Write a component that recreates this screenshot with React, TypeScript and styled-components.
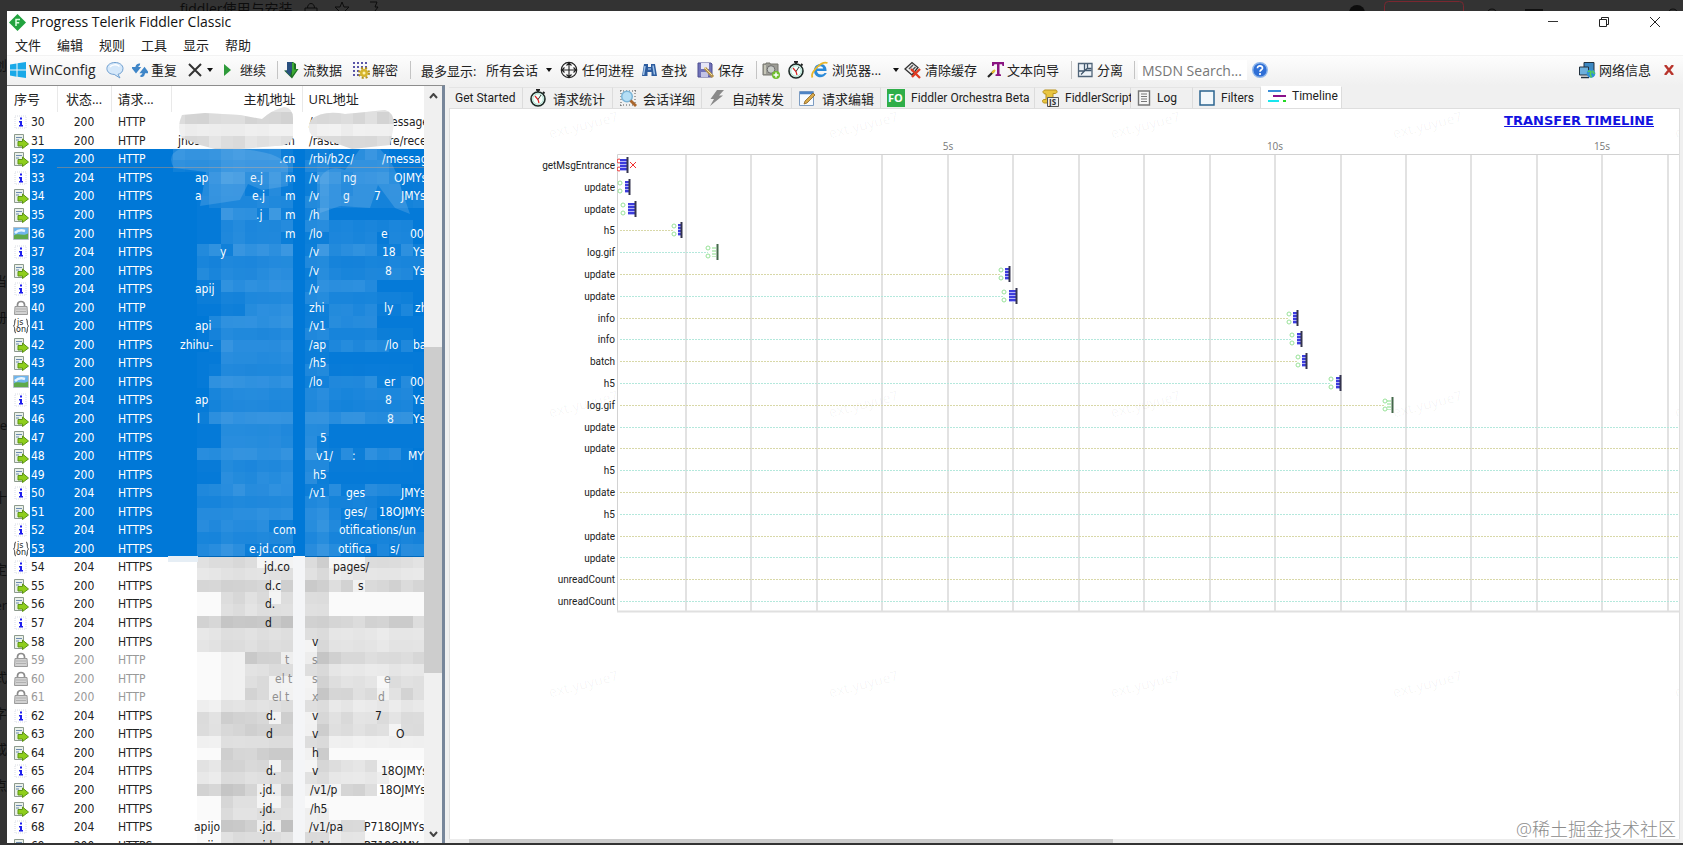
import React from 'react';
import styled, { createGlobalStyle } from 'styled-components';

const UI = `"Open Sans", "Noto Sans CJK SC", sans-serif`;
const SMALL = `Roboto, "Open Sans", sans-serif`;
const GRID = `"DejaVu Sans Condensed", "Open Sans", "Noto Sans CJK SC", sans-serif`;

const Global = createGlobalStyle`
  * { box-sizing: border-box; }
  body { margin: 0; background: #333; font-family: ${UI}; font-size: 13px; color: #222; overflow: hidden; }
  button, input, select { font: inherit; color: inherit; border: 0; padding: 0; background: none; }
  svg { display: block; flex: none; }
`;

/* ---------- desktop behind the window ---------- */
const Desktop = styled.div`
  height: 100vh;
  display: grid;
  grid-template-columns: 7px minmax(0, 1fr);
  grid-template-rows: 11px minmax(0, 1fr) 2px;
  background: #333;
  overflow: hidden;
`;
const BehindTop = styled.div`
  grid-column: 1 / 3;
  display: flex;
  gap: 10px;
  padding-left: 180px;
  overflow: hidden;
  color: #0c0c0c;
  font-size: 14px;
  line-height: 18px;
`;
const BehindRight = styled.div`
  margin-left: auto;
`;
const BehindLeft = styled.div`
  display: flex;
  flex-direction: column;
  align-items: flex-end;
  gap: 16px;
  padding-top: 44px;
  overflow: hidden;
  color: #111;
  font-size: 13px;
  line-height: 20px;
  white-space: nowrap;
`;
const Window = styled.main`
  display: flex;
  flex-direction: column;
  min-width: 0;
  min-height: 0;
  background: #fff;
  overflow: hidden;
  position: relative;
`;

/* ---------- title, menu ---------- */
const TitleBar = styled.header`
  display: flex;
  align-items: center;
  height: 23px;
  flex: none;
  padding: 0 22px 1px 2px;
  gap: 5px;
`;
const Title = styled.h1`
  flex: 1;
  margin: 0;
  font-size: 14px;
  line-height: 20px;
  font-weight: 400;
  color: #111;
`;
const WinButtons = styled.div`
  display: flex;
  gap: 39px;
`;
const IconButton = styled.button`
  display: flex;
`;
const MenuBar = styled.nav`
  display: flex;
  height: 21px;
  flex: none;
  padding-left: 8px;
  gap: 15px;
  align-items: center;
`;
const Menu = styled.button`
  width: 27px;
  line-height: 20px;
  white-space: nowrap;
  text-align: left;
`;

/* ---------- toolbar ---------- */
const Toolbar = styled.div`
  display: flex;
  align-items: center;
  height: 30px;
  flex: none;
  padding: 0 0 1px 2px;
  background: linear-gradient(#fdfdfd, #f0f0f0);
  border-top: 1px solid #f3f3f3;
`;
const Tool = styled.button<{ $w: number; $slot?: number; $end?: boolean }>`
  display: flex;
  align-items: center;
  flex: none;
  width: ${p => p.$w}px;
  height: 26px;
  line-height: 26px;
  white-space: nowrap;
  text-align: left;
  margin-left: ${p => (p.$end ? 'auto' : '0')};
  > svg:first-child { margin-right: ${p => (p.$slot ?? 18) - 18}px; }
  > svg + svg { margin-left: 1px; }
  > span + svg { margin-left: auto; margin-right: 5px; }
`;
const ToolLatin = styled.span`
  font-size: 14px;
`;
const Sep = styled.span<{ $w: number }>`
  flex: none;
  width: ${p => p.$w}px;
  height: 18px;
  border-left: 1px solid #c4c4c4;
`;
const ShowLabel = styled.label`
  width: 65px;
  flex: none;
  white-space: nowrap;
`;
const ShowSelect = styled.span`
  display: flex;
  align-items: center;
  width: 74px;
  gap: 7px;
  flex: none;
  select { appearance: none; width: 53px; height: 24px; white-space: nowrap; }
`;
const Search = styled.input`
  width: 109px;
  height: 20px;
  margin-right: 5px;
  padding-left: 4px;
  background: #fff;
  &, &::placeholder { font-size: 14px; }
  &::placeholder { color: #777; opacity: 1; }
`;

/* ---------- panes ---------- */
const Panes = styled.div`
  flex: 1;
  min-height: 0;
  display: flex;
  background: #f0f0f0;
`;
const Sessions = styled.section`
  display: flex;
  flex: none;
  width: 438px;
  padding-left: 1px;
  border-top: 1px solid #8d8d8d;
  border-right: 3px solid #77869a;
  background: #fff;
`;
const ListView = styled.div`
  position: relative;
  width: 416px;
  overflow: hidden;
  background: #fff;
`;
const Table = styled.table`
  table-layout: fixed;
  width: 416px;
  height: 768px;
  border-collapse: collapse;
  font-family: ${GRID};
  font-size: 12px;
  line-height: 16px;
  white-space: nowrap;
  th, td { padding: 0; overflow: hidden; }
  td { padding-top: 2px; }
`;
const Th = styled.th<{ $align: string }>`
  height: 26px;
  font-family: ${UI};
  font-size: 13px;
  font-weight: 400;
  text-align: ${p => p.$align};
  border-right: 1px solid #e9e9e9;
  && { padding: 0 6px; }
`;
const Row = styled.tr<{ $sel: boolean; $dim: boolean; $focus: boolean }>`
  color: ${p => (p.$sel ? '#fff' : p.$dim ? '#999' : '#222')};
  td { background: ${p => (p.$sel ? '#0078d7' : '#fff')}; }
  td:first-child { background: ${p => (p.$sel ? 'linear-gradient(90deg, #fff 22px, #0078d7 22px)' : '#fff')}; }
  td:nth-child(2) { text-align: center; }
  td:nth-child(3) { padding-left: 7px; }
  ${p => p.$focus && 'td:not(:first-child) { box-shadow: inset 0 -1px #5d86a8; }'}
`;
const NumCell = styled.div`
  display: flex;
  align-items: center;
  gap: 2px;
  padding-left: 5px;
  height: 16px;
`;
const Slots = styled.div`
  display: flex;
  height: 16px;
`;
const Slot = styled.span<{ $w: number }>`
  flex: none;
  width: ${p => p.$w}px;
`;
const Mosaic = styled.svg`
  position: absolute;
  left: 155px;
  top: 18px;
  pointer-events: none;
`;
const Scroll = styled.div`
  flex: 1;
  display: flex;
  flex-direction: column;
  align-items: center;
  justify-content: space-between;
  padding: 7px 0 6px;
  background: #f0f0f0;
  position: relative;
`;
const Thumb = styled.span`
  position: absolute;
  left: 0;
  right: 0;
  top: 34.5%;
  height: 43%;
  background: #cdcdcd;
`;

const Inspector = styled.section`
  flex: 1;
  min-width: 0;
  display: flex;
  flex-direction: column;
  padding: 1px 3px 0 4px;
`;
const Tabs = styled.div`
  display: flex;
  height: 22px;
  flex: none;
  align-items: flex-end;
`;
const Tab = styled.button<{ $w: number; $on?: boolean }>`
  display: flex;
  align-items: center;
  gap: 6px;
  flex: none;
  width: ${p => p.$w}px;
  height: ${p => (p.$on ? 22 : 21)}px;
  padding: ${p => (p.$on ? '0 0 3px 7px' : '0 0 0 6px')};
  background: ${p => (p.$on ? '#fff' : '#f0f0f0')};
  border-right: 1px solid #dcdcdc;
  border-top: 1px solid ${p => (p.$on ? '#fff' : '#e4e4e4')};
  white-space: nowrap;
`;
const TabLatin = styled.span`
  font-family: ${SMALL};
  font-size: 12px;
`;
const Panel = styled.div`
  flex: 1;
  min-height: 0;
  position: relative;
  background: #fff;
  border: 1px solid #dedede;
  border-bottom: 0;
  display: flex;
  flex-direction: column;
  overflow: hidden;
`;
const LinkRow = styled.div`
  height: 30px;
  flex: none;
  text-align: right;
  padding: 2px 25px 0 0;
  a { color: #1212e0; font: bold 13px/20px "DejaVu Sans", sans-serif; }
`;
const Chart = styled.div`
  display: flex;
  flex: none;
`;
const Labels = styled.ol`
  width: 167px;
  height: 458px;
  margin: 14px 0 0;
  padding: 0;
  list-style: none;
  display: flex;
  flex-direction: column;
  font-family: ${SMALL};
  font-size: 10px;
  text-align: right;
  flex: none;
`;
const Label = styled.li`
  flex: 1;
  display: flex;
  align-items: center;
  justify-content: flex-end;
  padding: 3px 2px 0 0;
`;
const Plot = styled.svg`
  flex: 1;
  min-width: 0;
  height: 474px;
  overflow: hidden;
  text { font: 10px ${UI}; fill: #777; }
`;
const HScroll = styled.div`
  height: 4px;
  flex: none;
  padding: 0 567px 0 20px;
  background: #ececec;
  &::before { content: ''; display: block; height: 4px; background: #cbcbcb; }
`;
const Mark = styled.span<{ $x: number; $y: number }>`
  position: absolute;
  left: ${p => p.$x}px;
  top: ${p => p.$y}px;
  transform: rotate(-14deg);
  color: rgba(0, 0, 0, 0.045);
  font-size: 14px;
  line-height: 20px;
  pointer-events: none;
`;
const Credit = styled.span`
  position: absolute;
  right: 7px;
  bottom: 2px;
  font-size: 18px;
  line-height: 24px;
  font-weight: 300;
  color: #8c8c8c;
`;

/* ---------- icons ---------- */
const I = ({ children, w = 18 }: { children: React.ReactNode; w?: number }) => (
  <svg width={w} height="18" viewBox={`0 0 ${w} 18`} fill="none" aria-hidden="true">{children}</svg>
);
const Caret = () => <svg width="6" height="4" viewBox="0 0 6 4"><path d="M0 0h6L3 4z" fill="#111" /></svg>;
const Logo = () => <svg width="17" height="17" viewBox="0 0 17 17"><path d="M8.500 0 17 8.500 8.500 17 0 8.500z" fill="#22a33f" /><path d="M7 12V5.500h4M7 8.700h3.200" stroke="#d9ffe0" strokeWidth="1.500" fill="none" /></svg>;
const WinIcon = () => <I><path d="M1 3.500 7.500 2.400V8.500H1zM8.500 2.200 17 1v7.500H8.500zM1 9.500h6.500v6.200L1 14.600zM8.500 9.500H17V17l-8.500-1.200z" fill="#19a9e8" /></I>;
const Bubble = () => <I><path d="M9 1.500c4.500 0 8 2.500 8 6s-2.600 5.400-5 5.800L14 17l-5.800-3.600C4 13.400.9 11 .9 7.500s3.600-6 8.100-6z" fill="#d5e8fa" stroke="#6f9fd0" /><path d="M4 6c2-2.500 7-3 9.500-.5" stroke="#fff" strokeWidth="1.500" /></I>;
const Replay = () => <I w={16}><path d="M8 3.500C5 3 4 5 4 9M.8 7 4 11l3.300-4z" stroke="#3f86c8" strokeWidth="1.800" fill="#3f86c8" /><path d="M8.500 15c3 .5 4-1.500 4-5.500M9.300 11.300l3.200-4 3 4z" stroke="#3f86c8" strokeWidth="1.800" fill="#3f86c8" /></I>;
const Cross = () => <I w={14}><path d="M1 3l12 12M13 3 1 15" stroke="#333" strokeWidth="2" /></I>;
const Play = () => <I w={12}><path d="M0 3l7 6-7 6z" fill="#2e9a3a" /></I>;
const Stream = () => <I><path d="M4 1h6l3 2v5h2.500L9 17.500 1 9.500h3z" fill="#1d6f24" /><path d="M4 1h5v8L7 15 2 9.500h2z" fill="#29507f" /><path d="M9 2h2v6.500h3L9 15z" fill="#3daa32" /></I>;
const Decode = () => <I><path d="M1 2h14M1 6h14M1 10h6M1 14h6" stroke="#5a55a8" strokeWidth="2" strokeDasharray="2 2" /><circle cx="12" cy="12" r="4" fill="#d6b52c" /><circle cx="12" cy="12" r="5" stroke="#b3921c" strokeWidth="2" strokeDasharray="2 2" /><circle cx="12" cy="12" r="1.500" fill="#fff3b0" /></I>;
const Target = () => <I><circle cx="9" cy="9" r="7.700" stroke="#222" strokeWidth="1.200" /><path d="M9 1v16M1 9h16M6.500 4.500 9 2l2.500 2.500M6.500 13.500 9 16l2.500-2.500M4.500 6.500 2 9l2.500 2.500M13.500 6.500 16 9l-2.500 2.500" stroke="#222" strokeWidth="1.100" /></I>;
const Binoc = () => <I><path d="M3 3h4v3h3V3h4l2 12h-5.500v-4H6.500v4H1z" fill="#2d5c9e" /><path d="M4 5 2.500 14M12 4.500l1.500 9" stroke="#9fc3ea" strokeWidth="1.500" /><path d="M7 8h3" stroke="#c8def5" /></I>;
const Save = () => <I><path d="M1 2h13l1 1v13H1z" fill="#7072b8" stroke="#4d4f92" /><path d="M4 2h8v6H4z" fill="#e6e6f6" /><path d="M4 11h7v5H4z" fill="#c2c3e4" /><path d="m8 7 8 9" stroke="#b4924a" strokeWidth="3" /><path d="m7 6 8 8" stroke="#f3e0a0" /></I>;
const Camera = () => <I><path d="M1 3h3V2h4v1h8v11H1z" fill="#9c9c95" stroke="#76766f" /><circle cx="9" cy="8.500" r="3.800" fill="#c9cdc9" stroke="#6c6c6c" /><path d="M3 4v9" stroke="#c6c6b8" strokeWidth="2" /><circle cx="14" cy="14" r="4" fill="#6fbe2c" /><path d="M11.500 14h5M14 11.500v5" stroke="#fff" strokeWidth="1.500" /></I>;
const Clock = () => <I><path d="M7 .8h4M9 1v2M14 3l1.500 1.500" stroke="#222" strokeWidth="1.800" /><circle cx="9" cy="10" r="7" fill="#f5fffb" stroke="#1c2a26" strokeWidth="1.600" /><circle cx="9" cy="10" r="5.300" stroke="#a6dccb" /><path d="m6 7 3 3.500L10 14" stroke="#d22" strokeWidth="1.200" /><path d="m9 10.500 3-4.500" stroke="#333" /></I>;
const Browser = () => <I><path d="M15.500 10H6c.3 4 5.500 4.500 7.500 2h2.300C12.500 18.500 3 17.500 3 9.500 3 2 13 1 15 6.500c.4 1.200.6 2.400.5 3.500z" fill="#2b8ad8" /><path d="M6.200 7.500h6C11.500 4.500 7 4.500 6.200 7.500z" fill="#fff" /><path d="M1.500 16.500C-1 12 10-.5 16.500 2" stroke="#e8b62a" strokeWidth="1.800" /></I>;
const Clear = () => <I><path d="M1 8 8 1.500l6 5L8 14z" fill="#ececec" stroke="#333" strokeWidth="1.300" /><path d="m5 8 4-4M7.500 10l4-4" stroke="#555" strokeWidth="1.500" /><path d="m7 8 9 9M16 8l-8 8" stroke="#df3a22" strokeWidth="2.300" /></I>;
const Wizard = () => <I><path d="M5 1h12v4h-1.500L15 3.200h-2.500V13l1.500.5V15H8.500v-1.500L10 13V3.200H7.500L6.500 5H5z" fill="#8a1582" /><path d="m1 16 6-6" stroke="#222" strokeWidth="2.200" /><path d="m5 12 3-3" stroke="#e9c02e" strokeWidth="2.200" /></I>;
const Detach = () => <I><path d="M1.500 2.500h13.500v13H1.500z" stroke="#506478" strokeWidth="1.300" fill="#eef3f8" /><path d="M7.500 3v7H2M8 9.500h6.500M4 13.500l6-6M10.500 3v4.500h4" stroke="#42586e" strokeWidth="1.300" /></I>;
const Help = () => <svg width="16" height="16" viewBox="0 0 16 16"><circle cx="8" cy="8" r="7.300" fill="#2f6fd6" stroke="#8fb6ea" strokeWidth="1.400" /><path d="M5.500 6.200c0-3.200 5.200-3 5 0C10.400 7.800 8 7.800 8 9.800M8 11v2" stroke="#fff" strokeWidth="1.700" fill="none" /></svg>;
const Net = () => <I><path d="M6 1.500h10v9H6z" fill="#3c88c2" stroke="#22313f" /><path d="M1.500 6h9v8h-9z" fill="#6eb0dc" stroke="#22313f" /><path d="M3 16.500h8" stroke="#22313f" strokeWidth="1.500" /><circle cx="13" cy="12.500" r="4.300" fill="#2f8fd8" /><path d="M10 11c2-2.500 4 0 2.500 1.500s1.500 2 .5 4M15 9.500c-1 2 1 2 1.500 3.500" stroke="#58d051" strokeWidth="1.600" /></I>;
const RedX = () => <svg width="10" height="10" viewBox="0 0 10 10"><path d="m1 0 8 10M9 0 1 10" stroke="#b8342c" strokeWidth="2.400" /></svg>;

const Inspect = () => <I><path d="M1 2h16M1 16h16M2 1v16M16 1v16" stroke="#555" strokeDasharray="1 2" /><circle cx="8" cy="7.500" r="5.300" fill="#b5def5" stroke="#7cb5d8" strokeWidth="1.500" /><path d="m11.500 11.500 5.500 5.500" stroke="#a9662c" strokeWidth="2.800" /></I>;
const Bolt = () => <I><path d="M9 1h7l-5 5.500h4L2 17l4-7H2.500z" fill="#8a8a8a" /></I>;
const Compose = () => <I><path d="M1.500 2.500h14v14h-14z" fill="#f6faff" stroke="#7c9cc2" /><path d="M2 4h13" stroke="#4d83c4" strokeWidth="2.500" /><path d="m7 12 8-8 2 2-8 8-3 1z" fill="#d8a94a" stroke="#8a6424" strokeWidth=".8" /></I>;
const FO = () => <I><path d="M0 0h18v18H0z" fill="#2fae49" /><text x="1" y="13" fontFamily="Open Sans" fontSize="11" fontWeight="700" fill="#fff">FO</text></I>;
const Script = () => <I><path d="M2 2.500c1-2 3-1.500 4-1.500h9c2 1 1 3.500-1 3.500h-2V11c0 2-1 3-3 3H3c-2-.5-2-3.500 0-3.500h2V5C3.500 5 2 4.500 2 2.500z" fill="#e9c541" stroke="#b8921e" /><path d="M6.500 8.500h11v9h-11z" fill="#efefef" stroke="#555" /><text x="8" y="16" fontFamily="Open Sans" fontSize="8" fontWeight="700" fill="#333">JS</text></I>;
const LogIcon = () => <I w={14}><path d="M1.500 2h11v14h-11z" fill="#f6f6f6" stroke="#777" strokeWidth="1.400" /><path d="M4 5h6M4 7.500h6M4 10h6M4 12.500h6" stroke="#777" /></I>;
const FilterBox = () => <I w={16}><path d="M1 2h14v14H1z" fill="#f3f8fb" stroke="#2b6490" strokeWidth="1.500" /></I>;
const Lines = () => <I><path d="M0 4h13" stroke="#3b8fd8" strokeWidth="2" /><path d="M5 9h13" stroke="#8a108a" strokeWidth="2" /><path d="M0 14h11" stroke="#19e6ee" strokeWidth="2" /><path d="M15 14h3" stroke="#24d824" strokeWidth="2" /></I>;

const rowIcons: Record<string, React.ReactNode> = {
  d: <svg width="16" height="16" viewBox="0 0 16 16"><path d="M1.500 1.500h9v13h-9z" fill="#eaf0ea" stroke="#8d9a8d" /><path d="M3 4.500h6M3 7h3" stroke="#6d8bb0" /><path d="M5 8.500h4.500V6L15.500 11l-6 4.500V13H5z" fill="#8fce1c" stroke="#5c9416" /></svg>,
  i: <svg width="16" height="16" viewBox="0 0 16 16"><path d="M2 2h11v12H2z" fill="#fff" stroke="#d8dce4" strokeDasharray="1 1" /><path d="M7 3.500h2v2H7zM6 7h3v4h1v1.500H6V11h1V8.500H6z" fill="#1d1dee" /></svg>,
  p: <svg width="16" height="16" viewBox="0 0 16 16"><path d="M.5 1.500h15v12H.5z" fill="#6fb5ec" stroke="#b4bec4" /><path d="M1 9.500c4-3 9 1 14-2V13H1z" fill="#5fa94a" /><path d="M2 7c3-3 7-3 10-2" stroke="#e6f4ff" strokeWidth="2.500" fill="none" /></svg>,
  l: <svg width="16" height="16" viewBox="0 0 16 16"><path d="M4.500 7V4.500C5 .5 11 .5 11.500 4.500V7" stroke="#8b8b8b" strokeWidth="1.700" fill="none" /><path d="M2 6.500h12l.5 8h-13z" fill="#d2d2d2" stroke="#999" /><path d="M3 9h10M3 11.500h10" stroke="#b0b0b0" /></svg>,
  j: <svg width="16" height="16" viewBox="0 0 16 16"><path d="M3 1C1 1 2.500 7 .5 8c2 1 .5 7 2.500 7M13 1c2 0 .5 6 2.500 7-2 1-.5 7-2.500 7" stroke="#333" fill="none" /><text x="4" y="7" fontFamily="DejaVu Sans" fontSize="8" fill="#222">js</text><text x="3" y="14" fontFamily="DejaVu Sans" fontSize="8" fill="#222">on</text></svg>,
};

/* ---------- session data: visible pieces of the masked columns, with their x ---------- */
type Piece = [number, string];
type Session = { n: number; k: string; s: number; h: Piece[]; u: Piece[]; hx: number; ux: number };
const r = (n: number, k: string, hx: number, ux: number, h: Piece[], u: Piece[]): Session =>
  ({ n, k, s: k === 'i' && n !== 30 ? 204 : 200, h, u, hx, ux });
const sessions: Session[] = [
  r(30, 'i', 181, 390, [], [[309, '/'], [391, 'essage']]),
  r(31, 'd', 209, 380, [[178, 'jnos-'], [282, 'cn']], [[309, '/rastbc/'], [382, 'ure/rece']]),
  r(32, 'd', 173, 384, [[279, '.cn']], [[309, '/rbi/b2c/'], [382, '/message']]),
  r(33, 'i', 209, 425, [[195, 'ap'], [250, 'e.j'], [285, 'm']], [[309, '/v'], [343, 'ng'], [394, 'OJMYs']]),
  r(34, 'd', 209, 425, [[195, 'a'], [252, 'e.j'], [285, 'm']], [[309, '/v'], [343, 'g'], [374, '7'], [401, 'JMYs']]),
  r(35, 'd', 221, 329, [[256, '.j'], [285, 'm']], [[309, '/h']]),
  r(36, 'p', 221, 413, [[285, 'm']], [[309, '/lo'], [381, 'e'], [410, '00']]),
  r(37, 'i', 197, 425, [[220, 'y']], [[309, '/v'], [382, '18'], [413, 'Ys']]),
  r(38, 'd', 197, 425, [], [[309, '/v'], [385, '8'], [413, 'Ys']]),
  r(39, 'i', 197, 377, [[195, 'apij']], [[309, '/v']]),
  r(40, 'l', 245, 413, [], [[309, 'zhi'], [384, 'ly'], [415, 'zh']]),
  r(41, 'j', 209, 377, [[195, 'api']], [[309, '/v1']]),
  r(42, 'd', 209, 413, [[180, 'zhihu-']], [[309, '/ap'], [385, '/lo'], [413, 'ba']]),
  r(43, 'd', 221, 329, [], [[309, '/h5']]),
  r(44, 'p', 209, 413, [], [[309, '/lo'], [384, 'er'], [410, '00']]),
  r(45, 'i', 209, 413, [[195, 'ap']], [[385, '8'], [413, 'Ys']]),
  r(46, 'd', 197, 413, [[197, 'l']], [[387, '8'], [413, 'Ys']]),
  r(47, 'd', 221, 329, [], [[320, '5']]),
  r(48, 'd', 197, 413, [], [[316, 'v1/'], [352, ':'], [408, 'MYs']]),
  r(49, 'd', 221, 329, [], [[313, 'h5']]),
  r(50, 'i', 197, 401, [], [[309, '/v1'], [346, 'ges'], [401, 'JMYs']]),
  r(51, 'd', 197, 377, [], [[344, 'ges/'], [379, '18OJMYs']]),
  r(52, 'i', 197, 425, [[273, 'com']], [[339, 'otifications/un']]),
  r(53, 'j', 197, 425, [[249, 'e.jd.com']], [[338, 'otifica'], [390, 's/']]),
  r(54, 'i', 197, 425, [[264, 'jd.co']], [[333, 'pages/']]),
  r(55, 'd', 197, 425, [[265, 'd.c']], [[358, 's']]),
  r(56, 'd', 221, 329, [[265, 'd.']], []),
  r(57, 'i', 197, 425, [[265, 'd']], []),
  r(58, 'd', 197, 425, [], [[312, 'v']]),
  r(59, 'l', 245, 425, [[285, 't']], [[312, 's']]),
  r(60, 'l', 245, 425, [[275, 'el t']], [[312, 's'], [384, 'e']]),
  r(61, 'l', 245, 425, [[272, 'el t']], [[312, 'x'], [378, 'd']]),
  r(62, 'i', 197, 425, [[266, 'd.']], [[312, 'v'], [375, '7']]),
  r(63, 'd', 197, 425, [[266, 'd']], [[312, 'v'], [396, 'O']]),
  r(64, 'd', 221, 329, [], [[312, 'h']]),
  r(65, 'i', 197, 389, [[266, 'd.']], [[312, 'v'], [381, '18OJMYs']]),
  r(66, 'd', 197, 377, [[259, '.jd.']], [[310, '/v1/p'], [379, '18OJMYs']]),
  r(67, 'd', 221, 305, [[259, '.jd.']], [[310, '/h5']]),
  r(68, 'i', 221, 365, [[194, 'apijo'], [259, '.jd.']], [[309, '/v1/pa'], [364, 'P718OJMYs']]),
  r(69, 'd', 221, 365, [[194, 'apijo'], [259, '.jd.']], [[309, '/v1/pa'], [364, 'P718OJMYs']]),
];
const isHttp = (n: number) => n < 33 || n === 40 || (n > 58 && n < 62);

const Pieces = ({ list, from }: { list: Piece[]; from: number }) => (
  <Slots>
    {list.length > 0 && <Slot $w={list[0][0] - from} />}
    {list.map(([x, t], i) => <Slot key={x} $w={(list[i + 1]?.[0] ?? x + 60) - x}>{t}</Slot>)}
  </Slots>
);

/* ---------- pixelated mask over the host and URL columns ---------- */
const CELL = 12;
const noise = (a: number, b: number) => { const v = Math.sin(a * 12.9898 + b * 78.233) * 43758.5453; return v - Math.floor(v); };
const rowTop = (i: number) => 112 + i * 18.55;
const blocks: React.ReactNode[] = [];
for (let row = 3; row < 61; row++) {
  for (let col = -1; col < 20; col++) {
    const x = 185 + col * CELL, y = 112 + row * CELL;
    const dark = y >= 148 && y < 556;
    let a = 0, clear = false;
    sessions.forEach((s, i) => {
      const top = rowTop(i) + 3, cover = Math.max(0, Math.min(y + CELL, top + 12) - Math.max(y, top)) / CELL;
      if (!cover) return;
      const inHost = x >= s.hx - 8 && x < 293, inUrl = x >= 305 && x < s.ux;
      if (inHost || inUrl) a += cover * (0.6 + 0.4 * noise(col, i));
      if (cover > 0.5 && [...s.h, ...s.u].some(([px, t]) => x + CELL > px + 4 && x < px + t.length * 6 - 4)) clear = true;
    });
    const smear = (x >= 221 && x < 293) || (x >= 305 && x < 329);
    if (smear) a += 0.25 + 0.15 * noise(col, 99);
    else if (x >= 197 && x !== 293 && y > 190) a += 0.1;
    if (clear) a *= 0.3;
    if (a < 0.05) continue;
    blocks.push(<rect key={`${row}.${col}`} x={x} y={y} width={CELL} height={CELL} fill={dark ? '#b4d8f6' : '#000'} fillOpacity={a * (dark ? 0.27 : 0.19)} />);
  }
}
const bands = ['#d6d6d6', '#d2d2d2', '#ececec', '#d8d8d8', '#d8d8d8'];
const HeadMask = () => (
  <>
    <defs>
      <clipPath id="blobs">
        <path d="M182 115 205 113 240 115 262 119Q272 110 284 107 293 108 293 118V138Q288 147 275 146L240 149 215 149 200 145 182 138Q176 128 182 115z" />
        <path d="M311 120Q322 110 345 114L366 112 385 110Q394 112 394 125L390 145 352 149 335 143 312 136Q306 128 311 120z" />
      </clipPath>
    </defs>
    <g clipPath="url(#blobs)">
      {bands.map((c, b) => <path key={b} d={`M171 ${100 + b * CELL}h254v${CELL}h-254z`} fill={c} />)}
      {Array.from({ length: 84 }, (_, i) => (
        <rect key={i} x={173 + (i % 21) * CELL} y={100 + Math.floor(i / 21) * CELL} width={CELL} height={CELL} fill="#fff" fillOpacity={noise(i, 7) * 0.35} />
      ))}
    </g>
    <path d="M174 168Q166 155 180 149L240 149Q280 152 288 166V186L262 190 248 184 240 200 200 206 206 172z" fill="#b4d8f6" fillOpacity=".2" />
    <path d="M320 213V178Q328 164 345 170L360 149H380Q396 165 400 185L410 214 395 208 378 185 370 208 340 206z" fill="#b4d8f6" fillOpacity=".2" />
    <path d="M293 556h12v290h-12z" fill="#f4f5f7" />
    <path d="M168 556h30v6h-30z" fill="#e6eef5" />
  </>
);

/* ---------- timeline ---------- */
const labels = ['getMsgEntrance', 'update', 'update', 'h5', 'log.gif', 'update', 'update', 'info', 'info', 'batch', 'h5', 'log.gif',
  'update', 'update', 'h5', 'update', 'h5', 'update', 'update', 'unreadCount', 'unreadCount'];
/* end of the transfer, width of the body stripes, position of the connection rings */
const transfers: [number, number, number][] = [[10, 7, -2], [12, 4, 3], [18, 7, 6], [64, 3, 57], [100, 0, 91], [392, 4, 384], [399, 7, 387],
  [680, 4, 672], [684, 4, 675], [689, 4, 681], [723, 4, 714], [775, 0, 768]];
const PITCH = 458 / 21;

const Timeline = () => (
  <Plot>
    {Array.from({ length: 40 }, (_, i) => {
      const x = 69 + Math.round(i * 65.45);
      return <path key={i} d={`M${x} 15.500V473`} stroke="#e2e2e2" strokeWidth="2" />;
    })}
    <path d="M.5 473V15.500H3000" stroke="#d2d2d2" fill="none" />
    <path d="M0 472.500H3000" stroke="#e0e0e0" strokeWidth="2" />
    {[1, 2, 3, 4].map(i => <text key={i} x={4 + i * 327} y="11" textAnchor="middle">{i * 5}s</text>)}
    {labels.map((_, i) => {
      if (i < 3) return null;
      const y = Math.round(15 + (i + 0.5) * PITCH) + 0.5, end = transfers[i]?.[2] ?? 3000;
      return <path key={i} d={`M3 ${y}H${end}`} stroke={i % 2 ? '#d8d8a8' : '#b4e8dc'} strokeDasharray="2 1" />;
    })}
    {transfers.map(([end, w, ring], i) => {
      const y = Math.round(15 + (i + 0.5) * PITCH), c = i ? '#98e298' : '#f03030';
      return (
        <g key={i} fill="none">
          <circle cx={Math.max(ring, 2)} cy={y - 4} r="2" stroke={c} />
          <circle cx={Math.max(ring, 2)} cy={y + 4} r="2" stroke={c} />
          {w > 0
            ? <><path d={`M${end - w} ${y}H${end}`} stroke="#b4b4f7" strokeWidth="12" /><path d={`M${end - w} ${y - 5}h${w}m-${w} 3h${w}m-${w} 3h${w}m-${w} 3h${w}`} stroke="#3c3cdc" strokeWidth="2" /></>
            : <path d={`M${end - 4} ${y - 5}v10M${end - 2} ${y - 5}v10`} stroke="#86dd86" strokeDasharray="2 1" />}
          <path d={`M${end + 0.5} ${y - 8}v16`} stroke={w ? '#34344e' : '#44684a'} strokeWidth="2" />
          {i === 0 && <path d={`M13 ${y - 3}l6 6m0-6l-6 6`} stroke="#f03030" />}
        </g>
      );
    })}
  </Plot>
);

const tabs: [string, number, React.ReactNode][] = [
  ['Get Started', 74, null], ['请求统计', 90, <Clock />], ['会话详细', 89, <Inspect />], ['自动转发', 90, <Bolt />], ['请求编辑', 89, <Compose />],
  ['Fiddler Orchestra Beta', 154, <FO />], ['FiddlerScript', 96, <Script />], ['Log', 62, <LogIcon />], ['Filters', 68, <FilterBox />], ['Timeline', 81, <Lines />],
];

export default function App() {
  return (
    <>
      <Global />
      <Desktop>
        <BehindTop>
          <span>fiddler使用与安装</span>
          <svg width="90" height="18" viewBox="0 0 90 18" fill="none" stroke="#0c0c0c"><path d="M2 8h12v8H2zM4.500 8c0-6 7-6 7 0M39 2l2 5h5l-4 4M39 2l-2 5h-5l4 4M67 2h7l-2 5h3l-6 8" /></svg>
          <BehindRight>
            <svg width="340" height="11" viewBox="0 0 340 11" fill="none"><circle cx="14" cy="13" r="8" fill="#0d0d0d" /><rect x="41.500" y="1.500" width="79" height="22" rx="4" stroke="#7a2730" /><circle cx="149" cy="14" r="5" stroke="#0d0d0d" /><path d="M182 10h18" stroke="#111" strokeWidth="2" /><circle cx="330" cy="14" r="5" stroke="#0d0d0d" /></svg>
          </BehindRight>
        </BehindTop>
        <BehindLeft>
          {['以创', '', '', '', '', '', '当', '册', '', '', 'e', '', '十', '', '定', 'er', '', '式', '字', '或', '点'].map((t, i) => <span key={i}>{t || '\u00a0'}</span>)}
        </BehindLeft>
        <Window>
          <TitleBar>
            <Logo />
            <Title>Progress Telerik Fiddler Classic</Title>
            <WinButtons>
              <IconButton aria-label="Minimize"><svg width="12" height="12"><path d="M1 5.500h10" stroke="#333" /></svg></IconButton>
              <IconButton aria-label="Restore"><svg width="12" height="12" fill="none" stroke="#222"><path d="M1.500 3.500h7v7h-7zM3.500 3V1.500h7v7H9" /></svg></IconButton>
              <IconButton aria-label="Close"><svg width="12" height="12" stroke="#222"><path d="m1 1 10 10M11 1 1 11" /></svg></IconButton>
            </WinButtons>
          </TitleBar>
          <MenuBar>
            {['文件', '编辑', '规则', '工具', '显示', '帮助'].map(m => <Menu key={m}>{m}</Menu>)}
          </MenuBar>
          <Toolbar>
            <Tool $w={97} $slot={20}><WinIcon /><ToolLatin>WinConfig</ToolLatin></Tool>
            <Tool $w={26} aria-label="Comment"><Bubble /></Tool>
            <Tool $w={56} $slot={21}><Replay /><span>重复</span></Tool>
            <Tool $w={36} $slot={22} aria-label="Remove"><Cross /><Caret /></Tool>
            <Tool $w={53} $slot={22}><Play /><span>继续</span></Tool>
            <Sep $w={6} />
            <Tool $w={69} $slot={20}><Stream /><span>流数据</span></Tool>
            <Tool $w={58} $slot={20}><Decode /><span>解密</span></Tool>
            <Sep $w={11} />
            <ShowLabel htmlFor="keep">最多显示:</ShowLabel>
            <ShowSelect><select id="keep"><option>所有会话</option></select><Caret /></ShowSelect>
            <Tool $w={81} $slot={22}><Target /><span>任何进程</span></Tool>
            <Tool $w={56} $slot={20}><Binoc /><span>查找</span></Tool>
            <Tool $w={59} $slot={21}><Save /><span>保存</span></Tool>
            <Sep $w={6} />
            <Tool $w={25} aria-label="Screenshot"><Camera /></Tool>
            <Tool $w={24} aria-label="Timer"><Clock /></Tool>
            <Tool $w={93} $slot={21}><Browser /><span>浏览器...</span><Caret /></Tool>
            <Tool $w={83} $slot={21}><Clear /><span>清除缓存</span></Tool>
            <Tool $w={84} $slot={20}><Wizard /><span>文本向导</span></Tool>
            <Sep $w={6} />
            <Tool $w={57} $slot={20}><Detach /><span>分离</span></Tool>
            <Sep $w={4} />
            <Search aria-label="MSDN Search" placeholder="MSDN Search..." />
            <IconButton aria-label="Help"><Help /></IconButton>
            <Tool $w={86} $slot={21} $end><Net /><span>网络信息</span></Tool>
            <Tool $w={19} aria-label="Close toolbar"><RedX /></Tool>
          </Toolbar>
          <Panes>
            <Sessions>
              <ListView>
                <Table>
                  <colgroup><col width="49" /><col width="54" /><col width="60" /><col width="131" /><col width="122" /></colgroup>
                  <thead>
                    <tr><Th $align="left">序号</Th><Th $align="center">状态...</Th><Th $align="left">请求...</Th><Th $align="right">主机地址</Th><Th $align="left">URL地址</Th></tr>
                  </thead>
                  <tbody>
                    {sessions.map(s => (
                      <Row key={s.n} $sel={s.n > 31 && s.n < 54} $dim={s.n > 58 && s.n < 62} $focus={s.n === 32}>
                        <td><NumCell>{rowIcons[s.k]}{s.n}</NumCell></td>
                        <td>{s.s}</td>
                        <td>{isHttp(s.n) ? 'HTTP' : 'HTTPS'}</td>
                        <td><Pieces list={s.h} from={171} /></td>
                        <td><Pieces list={s.u} from={302} /></td>
                      </Row>
                    ))}
                  </tbody>
                </Table>
                <Mosaic width="261" height="739" viewBox="163 104 261 739" aria-hidden="true">{blocks}<HeadMask /></Mosaic>
              </ListView>
              <Scroll>
                <Thumb />
                <svg width="9" height="6" fill="none" stroke="#444" strokeWidth="2"><path d="m1 5 3.500-4L8 5" /></svg>
                <svg width="9" height="6" fill="none" stroke="#444" strokeWidth="2"><path d="m1 1 3.500 4L8 1" /></svg>
              </Scroll>
            </Sessions>
            <Inspector>
              <Tabs role="tablist">
                {tabs.map(([t, w, icon]) => (
                  <Tab key={t} role="tab" aria-selected={t === 'Timeline'} $w={w} $on={t === 'Timeline'}>
                    {icon}{/^[A-Z]/.test(t) ? <TabLatin>{t}</TabLatin> : t}
                  </Tab>
                ))}
              </Tabs>
              <Panel>
                {[16, 295, 575].map(y => [98, 378, 660, 942, 1224].map(x => <Mark key={`${x}.${y}`} $x={x} $y={y - 10}>ext.yuyue7</Mark>))}
                <LinkRow><a href="#timeline">TRANSFER TIMELINE</a></LinkRow>
                <Chart>
                  <Labels>{labels.map((l, i) => <Label key={i}>{l}</Label>)}</Labels>
                  <Timeline />
                </Chart>
              </Panel>
              <HScroll />
            </Inspector>
          </Panes>
          <Credit>@稀土掘金技术社区</Credit>
        </Window>
      </Desktop>
    </>
  );
}
